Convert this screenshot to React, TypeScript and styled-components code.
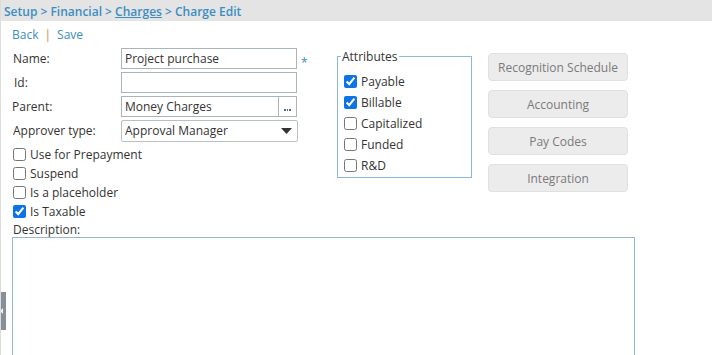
import styled, { createGlobalStyle } from "styled-components";

const GlobalStyle = createGlobalStyle`
  html, body {
    margin: 0;
    padding: 0;
    background: #fff;
    overflow: hidden;
  }
  body {
    font-family: "Open Sans", "Liberation Sans", sans-serif;
    font-size: 12px;
    color: #333;
  }
`;

const Page = styled.div`
  position: relative;
  height: 355px;
  overflow: hidden;
  border-left: 1px solid #dcdcdc;
  box-sizing: border-box;
`;

const Breadcrumb = styled.div`
  height: 21px;
  margin-left: -1px;
  background: #e4e4e4;
  padding: 1px 0 0 4px;
  box-sizing: border-box;
  display: flex;
  align-items: center;
  font-size: 12px;
  font-weight: 600;
  color: #3b8ec2;

  a {
    color: #3b8ec2;
    text-decoration: underline;
  }
`;

const Crumb = styled.span`
  white-space: pre;
`;

const Body = styled.div`
  padding: 4px 0 0 11px;
`;

const Actions = styled.div`
  height: 18px;
  display: flex;
  align-items: center;
  gap: 6px;
  color: #3b8ec2;
  font-size: 12px;
`;

const Divider = styled.span`
  color: #c98a55;
`;

const Top = styled.div`
  display: flex;
  align-items: flex-start;
  margin-top: 5px;
`;

const LeftCol = styled.div`
  width: 325px;
  display: flex;
  flex-direction: column;
`;

const FieldRow = styled.div<{ $indent?: number }>`
  display: flex;
  align-items: center;
  height: 21px;
  margin-bottom: 3px;
  padding-left: ${({ $indent }) => $indent ?? 1}px;
`;

const Label = styled.label<{ $w?: number }>`
  width: ${({ $w }) => $w ?? 108}px;
  color: #333;
  flex-shrink: 0;
`;

const TextInput = styled.input`
  width: 176px;
  height: 21px;
  box-sizing: border-box;
  border: 1px solid #a9b4bd;
  padding: 0 3px;
  font: inherit;
  color: #333;
  outline: none;
`;

const Required = styled.span`
  color: #3b8ec2;
  margin: 8px 0 0 4px;
  font-size: 12px;
`;

const Lookup = styled.div`
  width: 176px;
  height: 21px;
  display: flex;
  box-sizing: border-box;
  border: 1px solid #a9b4bd;
`;

const LookupText = styled.div`
  flex: 1;
  padding: 0 3px;
  display: flex;
  align-items: center;
  color: #333;
`;

const LookupButton = styled.div`
  width: 18px;
  border-left: 1px solid #a9b4bd;
  display: flex;
  align-items: center;
  justify-content: center;
  gap: 1px;
  padding-top: 7px;
  box-sizing: border-box;
`;

const Dot = styled.span`
  width: 1.5px;
  height: 1.5px;
  background: #4a6a88;
`;

const SelectBox = styled.div`
  position: relative;
  width: 177px;
  height: 22px;
  box-sizing: border-box;
  border: 1px solid #b9bfc4;
  border-radius: 2px;
  display: flex;
  align-items: center;
  padding-left: 3px;
  color: #333;

  svg {
    position: absolute;
    right: 5px;
    top: 7px;
  }
`;

const Checks = styled.div`
  display: flex;
  flex-direction: column;
  margin-top: 1px;
`;

const CheckRow = styled.label`
  display: flex;
  align-items: center;
  height: 19px;
  color: #333;

  input {
    width: 13px;
    height: 13px;
    margin: 0 4px 0 1px;
    accent-color: #0b74e6;
  }
`;

const DescLabel = styled.div`
  margin-top: 0;
  padding-left: 1px;
  height: 16px;
`;

const Fieldset = styled.fieldset`
  width: 135px;
  margin: 0;
  padding: 6px 0 0 5px;
  border: 1px solid #8eb9d4;
  box-sizing: border-box;
  height: 130px;

  legend {
    padding: 0 1px;
    margin-left: -2px;
    color: #333;
  }
`;

const AttrRow = styled(CheckRow)`
  height: 21px;
`;

const ButtonCol = styled.div`
  margin: 5px 0 0 16px;
  display: flex;
  flex-direction: column;
  gap: 9px;
`;

const GrayButton = styled.div`
  width: 140px;
  height: 28px;
  box-sizing: border-box;
  border: 1px solid #e0e0e0;
  border-radius: 4px;
  background: #ececec;
  color: #7a7a7a;
  display: flex;
  align-items: center;
  justify-content: center;
`;

const Description = styled.textarea`
  display: block;
  width: 623px;
  height: 140px;
  margin-top: 0;
  box-sizing: border-box;
  border: 1px solid #8eb9d4;
  resize: none;
  outline: none;
  font: inherit;
`;

const SideTab = styled.div`
  position: absolute;
  left: -1px;
  top: 292px;
  width: 6px;
  height: 38px;
  background: #878f98;
  display: flex;
  align-items: center;

  &::after {
    content: "";
    border-right: 3px solid #f2f2f2;
    border-top: 3px solid transparent;
    border-bottom: 3px solid transparent;
  }
`;

const checks = [
  { label: "Use for Prepayment", on: false },
  { label: "Suspend", on: false },
  { label: "Is a placeholder", on: false },
  { label: "Is Taxable", on: true },
];

const attributes = [
  { label: "Payable", on: true },
  { label: "Billable", on: true },
  { label: "Capitalized", on: false },
  { label: "Funded", on: false },
  { label: "R&D", on: false },
];

const buttons = ["Recognition Schedule", "Accounting", "Pay Codes", "Integration"];

export default function App() {
  return (
    <>
      <GlobalStyle />
      <Page>
        <Breadcrumb>
          <Crumb>Setup &gt; Financial &gt; </Crumb>
          <a>Charges</a>
          <Crumb> &gt; Charge Edit</Crumb>
        </Breadcrumb>
        <Body>
          <Actions>
            <span>Back</span>
            <Divider>|</Divider>
            <span>Save</span>
          </Actions>
          <Top>
            <LeftCol>
              <FieldRow>
                <Label>Name:</Label>
                <TextInput defaultValue="Project purchase" />
                <Required>*</Required>
              </FieldRow>
              <FieldRow $indent={2}>
                <Label $w={107}>Id:</Label>
                <TextInput />
              </FieldRow>
              <FieldRow $indent={0}>
                <Label $w={109}>Parent:</Label>
                <Lookup>
                  <LookupText>Money Charges</LookupText>
                  <LookupButton>
                    <Dot />
                    <Dot />
                    <Dot />
                  </LookupButton>
                </Lookup>
              </FieldRow>
              <FieldRow>
                <Label>Approver type:</Label>
                <SelectBox>
                  Approval Manager
                  <svg width="11" height="6" viewBox="0 0 11 6">
                    <path d="M0 0 H11 L5.5 6 Z" fill="#333" />
                  </svg>
                </SelectBox>
              </FieldRow>
              <Checks>
                {checks.map((c) => (
                  <CheckRow key={c.label}>
                    <input type="checkbox" defaultChecked={c.on} />
                    {c.label}
                  </CheckRow>
                ))}
              </Checks>
              <DescLabel>Description:</DescLabel>
            </LeftCol>
            <Fieldset>
              <legend>Attributes</legend>
              {attributes.map((a) => (
                <AttrRow key={a.label}>
                  <input type="checkbox" defaultChecked={a.on} />
                  {a.label}
                </AttrRow>
              ))}
            </Fieldset>
            <ButtonCol>
              {buttons.map((b) => (
                <GrayButton key={b}>{b}</GrayButton>
              ))}
            </ButtonCol>
          </Top>
          <Description />
        </Body>
        <SideTab />
      </Page>
    </>
  );
}
